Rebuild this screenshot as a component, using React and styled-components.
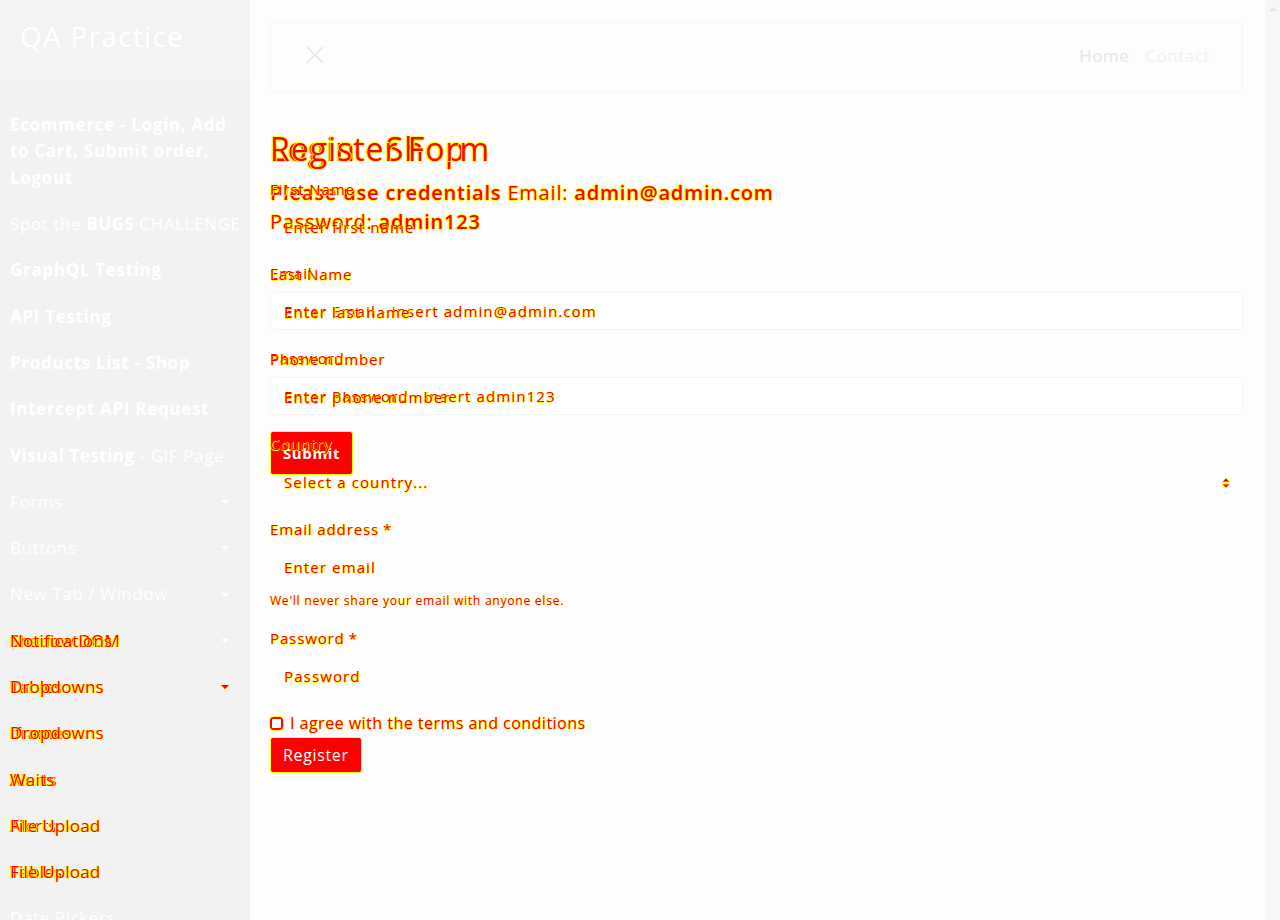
import React from "react";
import styled, { createGlobalStyle, css } from "styled-components";

const RED = "#ff0000";
const YEL = "#ffff00";

const Global = createGlobalStyle`
  html, body { margin: 0; padding: 0; height: 920px; overflow: hidden; background: #fdfdfd; }
  body { font-family: "Open Sans", "Noto Sans", sans-serif; letter-spacing: 0.055em; }
  * { box-sizing: border-box; }
`;

const diffText = css`
  color: ${RED};
  text-shadow: 1px 0 0 ${YEL}, -1px 0 0 ${YEL}, 0 1px 0 ${YEL}, 0 -1px 0 ${YEL};
`;

const Page = styled.div`
  display: flex;
  width: 1280px;
  height: 920px;
  overflow: hidden;
`;

const Sidebar = styled.aside`
  width: 250px;
  flex: none;
  background: #f2f2f2;
  color: #fff;
  overflow: hidden;
`;

const Brand = styled.div`
  height: 82px;
  padding: 16px 20px 0;
  font-size: 28px;
  line-height: 40px;
  font-weight: 500;
  letter-spacing: 0.045em;
  color: #fff;
  background: #f3f3f3;
`;

const Menu = styled.ul`
  list-style: none;
  margin: 0;
  padding: 20px 0 0;
`;

const Item = styled.li`
  display: flex;
  align-items: center;
  justify-content: space-between;
  padding: 9.9px 9px 9.9px 10px;
  font-size: 17px;
  line-height: 26.5px;
  font-weight: ${(p) => (p.$bold ? 700 : 400)};
  letter-spacing: ${(p) => (p.$bold ? "0.04em" : "0.035em")};
  color: #fff;
  white-space: ${(p) => (p.$wrap ? "normal" : "nowrap")};
  b { font-weight: 700; letter-spacing: 0.03em; }
`;

const Stack = styled.span`
  display: grid;
  > * { grid-area: 1 / 1; }
`;

const DiffWord = styled.span`
  ${diffText};
  letter-spacing: 0.01em;
  text-shadow: 1px 0 0 ${YEL}, -1px 0 0 ${YEL};
`;

const Caret = styled.span`
  width: 0;
  height: 0;
  margin-right: 12px;
  border-left: 4px solid transparent;
  border-right: 4px solid transparent;
  border-top: 4px solid ${(p) => (p.$diff ? RED : "#fff")};
  ${(p) => p.$diff && css`filter: drop-shadow(0 1px 0 ${YEL});`}
`;

const Main = styled.main`
  flex: 1;
  padding: 22px 22px 0 20px;
  background: #fdfdfd;
  min-width: 0;
`;

const Navbar = styled.nav`
  height: 71px;
  border: 1px solid #f6f6f6;
  border-radius: 4px;
  display: flex;
  align-items: center;
  justify-content: space-between;
  padding: 0 32px 5px 34px;
`;

const NavLinks = styled.div`
  display: flex;
  gap: 16px;
  font-size: 17px;
  letter-spacing: 0.03em;
`;

const NavLink = styled.span`
  color: ${(p) => p.$c};
`;

const Layers = styled.div`
  display: grid;
  margin-top: 37px;
  > * { grid-area: 1 / 1; }
`;

const Layer = styled.section`
  display: flex;
  flex-direction: column;
  align-items: flex-start;
  min-width: 0;
`;

const Title = styled.h2`
  margin: 0 0 10px;
  font-size: 32px;
  line-height: 38px;
  font-weight: 500;
  letter-spacing: 0.03em;
  ${diffText};
`;

const Group = styled.div`
  width: 100%;
  margin-bottom: ${(p) => p.$mb ?? 17}px;
`;

const Label = styled.label`
  display: block;
  font-size: 15px;
  line-height: 22px;
  margin-bottom: 8px;
  ${diffText};
  text-shadow: 1px 0 0 ${YEL}, 0 1px 0 ${YEL};
`;

const Field = styled.div`
  position: relative;
  width: 100%;
  height: 38px;
  display: flex;
  align-items: center;
  padding: 0 13px;
  font-size: 15px;
  letter-spacing: 0.075em;
  border-radius: 4px;
  border: 1px solid ${(p) => (p.$faint ? "#f5f5f5" : "transparent")};
  background: ${(p) => (p.$faint ? "#fff" : "transparent")};
  span { ${diffText}; text-shadow: 1px 0 0 ${YEL}, 0 1px 0 ${YEL}; }
`;

const SelectArrows = styled.svg`
  position: absolute;
  right: 12px;
  top: 13px;
`;

const Help = styled.div`
  margin-top: 6px;
  font-size: 12px;
  line-height: 18px;
  letter-spacing: 0.065em;
  ${diffText};
  text-shadow: 1px 0 0 ${YEL};
`;

const Req = styled.span`
  margin-left: 4px;
`;

const CheckRow = styled.label`
  display: flex;
  align-items: center;
  gap: 7px;
  height: 22px;
  font-size: 16px;
  letter-spacing: 0.03em;
  ${diffText};
  text-shadow: 1px 0 0 ${YEL}, 0 1px 0 ${YEL};
`;

const Box = styled.span`
  width: 13px;
  height: 13px;
  border: 2px solid ${RED};
  outline: 1px solid ${YEL};
  border-radius: 3px;
  background: #fff;
`;

const Btn = styled.button`
  font-family: inherit;
  letter-spacing: 0.04em;
  border: 1px solid ${YEL};
  background: ${RED};
  color: #fff;
  border-radius: 3px;
  padding: 0 12px;
  height: ${(p) => p.$h}px;
  margin-top: ${(p) => p.$mt || 0}px;
  font-size: ${(p) => p.$fs}px;
  font-weight: ${(p) => p.$fw};
  cursor: pointer;
`;

const Creds = styled.p`
  margin: 0 0 26px;
  font-size: 20px;
  line-height: 29px;
  letter-spacing: 0.04em;
  ${diffText};
  b { font-weight: 600; }
`;

const Scrollbar = styled.div`
  width: 15px;
  flex: none;
  background: #f7f7f7;
  display: flex;
  justify-content: center;
  padding-top: 7px;
`;

const ScrollUp = styled.span`
  width: 0;
  height: 0;
  border-left: 4px solid transparent;
  border-right: 4px solid transparent;
  border-bottom: 4px solid #e4e4e4;
`;

const menu = [
  { bold: true, wrap: true, text: "Ecommerce - Login, Add to Cart, Submit order, Logout" },
  { node: <>Spot the <b>BUGS</b> CHALLENGE</> },
  { bold: true, text: "GraphQL Testing" },
  { bold: true, text: "API Testing" },
  { bold: true, text: "Products List - Shop" },
  { bold: true, text: "Intercept API Request" },
  { node: <><b>Visual Testing</b> - GIF Page</> },
  { text: "Forms", caret: true },
  { text: "Buttons", caret: true },
  { text: "New Tab / Window", caret: true },
  { diff: ["Shadow DOM", "Notifications"], caret: true },
  { diff: ["Tables", "Dropdowns"], caret: true, caretDiff: true },
  { diff: ["Iframes", "Dropdowns"] },
  { diff: ["Alerts", "Waits"] },
  { diff: ["Alerts", "File Upload"] },
  { diff: ["Tables", "File Upload"] },
  { text: "Date Pickers" },
];

export default function App() {
  return (
    <Page>
      <Global />
      <Sidebar>
        <Brand>QA Practice</Brand>
        <Menu>
          {menu.map((m, i) => (
            <Item key={i} $bold={m.bold} $wrap={m.wrap}>
              {m.diff ? (
                <Stack>
                  <DiffWord>{m.diff[0]}</DiffWord>
                  <DiffWord>{m.diff[1]}</DiffWord>
                </Stack>
              ) : (
                <span>{m.node || m.text}</span>
              )}
              {m.caret && <Caret $diff={m.caretDiff} />}
            </Item>
          ))}
        </Menu>
      </Sidebar>
      <Main>
        <Navbar>
          <svg width="20" height="20" viewBox="0 0 20 20">
            <path d="M2 2 L18 18 M18 2 L2 18" stroke="#e6e6e6" strokeWidth="1.6" />
          </svg>
          <NavLinks>
            <NavLink $c="#e4e4e4">Home</NavLink>
            <NavLink $c="#f1f1f1">Contact</NavLink>
          </NavLinks>
        </Navbar>
        <Layers>
          <Layer>
            <Title>Login - Shop</Title>
            <Creds>
              <b>Please use credentials</b> Email: <b>admin@admin.com</b>
              <br />
              Password: <b>admin123</b>
            </Creds>
            <Group>
              <Label>Email</Label>
              <Field $faint><span>Enter Email - insert admin@admin.com</span></Field>
            </Group>
            <Group $mb={16}>
              <Label>Password</Label>
              <Field $faint><span>Enter Password - insert admin123</span></Field>
            </Group>
            <Btn $h={44} $fs={15} $fw={700}>Submit</Btn>
          </Layer>
          <Layer>
            <Title>Register Form</Title>
            <Group>
              <Label>First Name</Label>
              <Field><span>Enter first name</span></Field>
            </Group>
            <Group>
              <Label>Last Name</Label>
              <Field><span>Enter last name</span></Field>
            </Group>
            <Group>
              <Label>Phone number</Label>
              <Field><span>Enter phone number</span></Field>
            </Group>
            <Group>
              <Label>Country</Label>
              <Field>
                <span>Select a country...</span>
                <SelectArrows width="8" height="12" viewBox="0 0 8 12">
                  <path d="M0 5 L4 1 L8 5 Z M0 7 L4 11 L8 7 Z" fill={RED} stroke={YEL} strokeWidth="0.8" />
                </SelectArrows>
              </Field>
            </Group>
            <Group>
              <Label>Email address<Req>*</Req></Label>
              <Field><span>Enter email</span></Field>
              <Help>We'll never share your email with anyone else.</Help>
            </Group>
            <Group>
              <Label>Password<Req>*</Req></Label>
              <Field><span>Password</span></Field>
            </Group>
            <CheckRow>
              <Box />
              I agree with the terms and conditions
            </CheckRow>
            <Btn $h={36} $mt={3} $fs={16} $fw={500}>Register</Btn>
          </Layer>
        </Layers>
      </Main>
      <Scrollbar>
        <ScrollUp />
      </Scrollbar>
    </Page>
  );
}
